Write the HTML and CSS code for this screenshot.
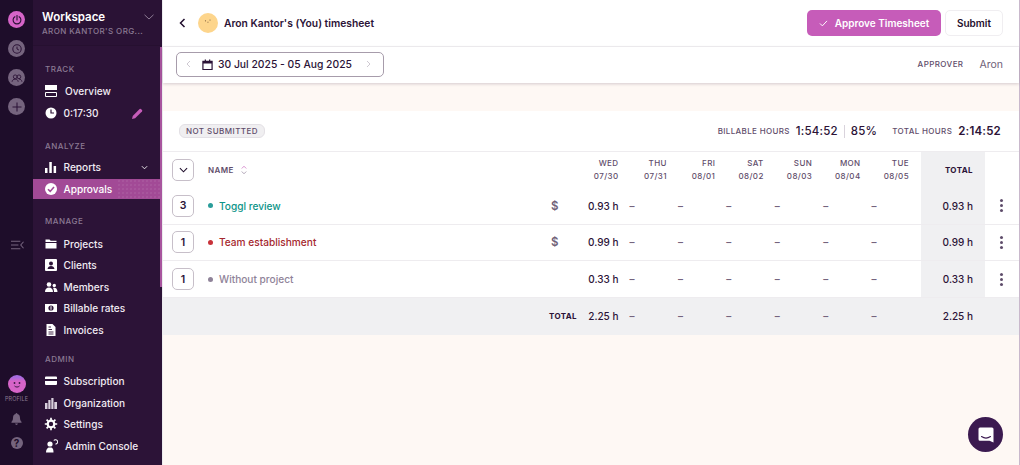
FILE: index.html
```html
<!DOCTYPE html>
<html lang="en">
<head>
<meta charset="utf-8">
<title>Timesheet</title>
<link rel="stylesheet" href="styles.css">
</head>
<body>
<div class="app">
  <nav class="rail">
    <div class="rail-btn pink"><svg viewBox="0 0 16 16" class="i12"><path d="M5.2 3.6a5.2 5.2 0 1 0 5.6 0" fill="none" stroke="#2c1337" stroke-width="1.5" stroke-linecap="round"/><path d="M8 2v6" stroke="#2c1337" stroke-width="1.5" stroke-linecap="round"/></svg></div>
    <div class="rail-btn"><svg viewBox="0 0 16 16" class="i12"><circle cx="8" cy="8" r="5.6" fill="none" stroke="#2c1337" stroke-width="1.4"/><path d="M8 4.8V8l2.6 1.4" fill="none" stroke="#2c1337" stroke-width="1.3"/></svg></div>
    <div class="rail-btn"><svg viewBox="0 0 16 16" class="i12"><circle cx="5.6" cy="6.4" r="2.5" fill="none" stroke="#2c1337" stroke-width="1.2"/><circle cx="10.6" cy="6.4" r="2.5" fill="none" stroke="#2c1337" stroke-width="1.2"/><path d="M1.4 13c.3-2.4 2-3.4 4.2-3.4s3.7 1 4 3.4M10.8 9.6c2 0 3.5 1 3.8 3.4" fill="none" stroke="#2c1337" stroke-width="1.2"/></svg></div>
    <div class="rail-btn"><svg viewBox="0 0 16 16" class="i12"><path d="M8 2v12M2 8h12" stroke="#2c1337" stroke-width="1.4"/></svg></div>
    <svg viewBox="0 0 14 10" class="collapse"><path d="M0 1h10M0 5h8M0 9h10" stroke="#75647e" stroke-width="1.1" fill="none"/><path d="M13.5 1.5 10.5 5l3 3.5" stroke="#75647e" stroke-width="1.1" fill="none"/></svg>
    <div class="avatar"><svg viewBox="0 0 18 18" class="i18"><circle cx="6.5" cy="8" r=".9" fill="#3a1a45"/><circle cx="11.5" cy="8" r=".9" fill="#3a1a45"/><path d="M6.5 11c1.5 1.4 3.5 1.4 5 0" stroke="#3a1a45" fill="none"/></svg></div>
    <span class="profile">PROFILE</span>
    <svg viewBox="0 0 12 13" class="bell"><path d="M6 0c.6 0 1 .4 1 1 2 .5 2.8 2 2.8 4 0 2.500.8 3.500 1.700 4.500v1H.5v-1C1.400 8.500 2.200 7.500 2.200 5c0-2 .8-3.500 2.800-4 0-.6.4-1 1-1zM4.500 11.500h3C7.400 12.500 6.800 13 6 13s-1.400-.5-1.500-1.500z" fill="#75647e"/></svg>
    <div class="help">?</div>
  </nav>

  <aside class="side">
    <header class="ws">
      <div class="ws-text">
        <div class="ws-name">Workspace</div>
        <div class="ws-org">ARON KANTOR'S ORG...</div>
      </div>
      <svg viewBox="0 0 10 6" class="ws-chev"><path d="M.5.8 5 5 9.500.8" fill="none" stroke="#8b7a93" stroke-width="1"/></svg>
    </header>
    <div class="group track">
      <div class="label">TRACK</div>
      <a class="item wide"><svg viewBox="0 0 14 14" class="ic"><path d="M1 1h12v5H1z" fill="#fff"/><path d="M1.500 8.500h11v4h-11z" fill="none" stroke="#fff"/></svg>Overview</a>
      <a class="item"><svg viewBox="0 0 14 14" class="ic"><circle cx="7" cy="7" r="5.500" fill="#fff"/><path d="M7 3.500V7h3" fill="none" stroke="#2c1337" stroke-width="1.200"/></svg>0:17:30<svg viewBox="0 0 12 12" class="pencil"><path d="M0 12l.8-3.400L8.300 1.100a1 1 0 0 1 1.400 0l1.200 1.200a1 1 0 0 1 0 1.400L3.400 11.200z" fill="#c65cb9"/></svg></a>
    </div>
    <div class="group analyze">
      <div class="label">ANALYZE</div>
      <a class="item"><svg viewBox="0 0 14 14" class="ic"><path d="M1 8h2.500v5H1zM5.300 2h2.500v11H5.300zM9.600 6h2.500v7H9.600z" fill="#fff"/></svg>Reports<svg viewBox="0 0 8 5" class="rep-chev"><path d="M1 1l3 3 3-3" fill="none" stroke="#fff" stroke-width="1"/></svg></a>
      <a class="item active"><svg viewBox="0 0 14 14" class="ic"><circle cx="7" cy="7" r="6" fill="#fff"/><path d="M4 7.200l2.200 2.200L10 5" fill="none" stroke="#a24a96" stroke-width="1.600"/></svg>Approvals</a>
    </div>
    <div class="group manage">
      <div class="label">MANAGE</div>
      <a class="item"><svg viewBox="0 0 14 14" class="ic"><path d="M1.500 2.500h4l1.200 1.300h5.800v1.200h-11zM1.500 6h11v5.500h-11z" fill="#fff"/></svg>Projects</a>
      <a class="item"><svg viewBox="0 0 14 14" class="ic"><path d="M2 1h10a1 1 0 0 1 1 1v10a1 1 0 0 1-1 1H2a1 1 0 0 1-1-1V2a1 1 0 0 1 1-1z" fill="#fff"/><circle cx="7" cy="5.500" r="2" fill="#2c1337"/><path d="M3.500 11c.3-2 1.800-3 3.500-3s3.200 1 3.500 3z" fill="#2c1337"/></svg>Clients</a>
      <a class="item"><svg viewBox="0 0 14 14" class="ic"><circle cx="5" cy="4.500" r="2.300" fill="#fff"/><circle cx="10.300" cy="5.500" r="1.700" fill="#fff"/><path d="M1 12c0-3 1.700-4.500 4-4.500S9 9 9 12zM10 12c0-1.500-.3-3-1-4 2.500-.7 4.500.8 4.500 4z" fill="#fff"/></svg>Members</a>
      <a class="item"><svg viewBox="0 0 14 14" class="ic"><path d="M1 3h12v8H1z" fill="#fff"/><circle cx="7" cy="7" r="2.600" fill="#2c1337"/><path d="M7 5.200v3.600" stroke="#fff"/></svg>Billable rates</a>
      <a class="item"><svg viewBox="0 0 14 14" class="ic"><path d="M2.500 1h6l3 3v9h-9z" fill="#fff"/><path d="M4.500 4h2.500M4.500 6.500h3.500M4.500 9h5M4.500 11h5" stroke="#2c1337" stroke-width=".9"/></svg>Invoices</a>
    </div>
    <div class="group admin">
      <div class="label">ADMIN</div>
      <a class="item"><svg viewBox="0 0 14 14" class="ic"><path d="M2 2.500h10a1 1 0 0 1 1 1V5H1V3.500a1 1 0 0 1 1-1zM1 7h12v3a1 1 0 0 1-1 1H2a1 1 0 0 1-1-1z" fill="#fff"/></svg>Subscription</a>
      <a class="item"><svg viewBox="0 0 14 14" class="ic"><path d="M1 7h2.500v6H1zM4.300 4h2.200v9H4.300zM7.300 2h2.200v11H7.300zM10.300 6H13v7h-2.700z" fill="#d8cfdc"/></svg>Organization</a>
      <a class="item"><svg viewBox="0 0 14 14" class="ic"><circle cx="7" cy="7" r="3.300" fill="none" stroke="#fff" stroke-width="2.200"/><path d="M7 .8v2.400M7 10.800v2.400M.8 7h2.400M10.800 7h2.400M2.600 2.600l1.700 1.700M9.700 9.700l1.700 1.700M2.600 11.400l1.700-1.700M9.700 4.300l1.700-1.700" stroke="#fff" stroke-width="1.700"/></svg>Settings</a>
      <a class="item wide"><svg viewBox="0 0 14 14" class="ic"><circle cx="6" cy="5" r="2.600" fill="#fff"/><path d="M2 13.500c0-2 .6-4 2.500-5h3c1.500.6 2 2.500 2 5z" fill="#fff"/><path d="M9.800 1.500a2.200 2.200 0 1 1 1.700 3.600" fill="none" stroke="#fff" stroke-width="1.100"/></svg>Admin Console</a>
    </div>
  </aside>
  <div class="thumb"></div>

  <main class="main">
    <header class="top">
      <svg viewBox="0 0 7 10" class="back"><path d="M5.500 1 1.500 5l4 4" fill="none" stroke="#1f0d2c" stroke-width="1.500"/></svg>
      <div class="face"><svg viewBox="0 0 20 20" class="i20"><circle cx="7.500" cy="7.800" r=".6" fill="#7a5a3a"/><circle cx="12" cy="7" r=".6" fill="#7a5a3a"/><path d="M9 9c.6.500 1.200.500 1.800.1" stroke="#7a5a3a" stroke-width=".5" fill="none"/></svg></div>
      <h1 class="title">Aron Kantor's (You) timesheet</h1>
      <button class="btn approve"><svg viewBox="0 0 10 8" class="check"><path d="M1 4l2.700 2.700L9 1" fill="none" stroke="#fff" stroke-width="1.100"/></svg>Approve Timesheet</button>
      <button class="btn submit">Submit</button>
    </header>
    <section class="datebar">
      <div class="range">
        <svg viewBox="0 0 5 8" class="arrow"><path d="M4 1 1 4l3 3" fill="none" stroke="#cfc9d2" stroke-width="1"/></svg>
        <svg viewBox="0 0 12 12" class="cal"><path d="M1 2.500h10v9H1z" fill="none" stroke="#2c1337" stroke-width="1.300"/><path d="M1 2.500h10V5H1zM3 .5h1.300v2H3zM7.700.5H9v2H7.700z" fill="#2c1337"/></svg>
        <span class="range-text">30 Jul 2025 - 05 Aug 2025</span>
        <svg viewBox="0 0 5 8" class="arrow"><path d="M1 1l3 3-3 3" fill="none" stroke="#cfc9d2" stroke-width="1"/></svg>
      </div>
      <span class="approver">APPROVER</span>
      <span class="aron">Aron</span>
    </section>
    <div class="band"></div>
    <section class="sheet">
      <div class="status">
        <span class="pill">NOT SUBMITTED</span>
        <span class="stat-label">BILLABLE HOURS</span>
        <span class="stat-val">1:54:52</span>
        <span class="stat-sep"></span>
        <span class="stat-val">85%</span>
        <span class="stat-label gap">TOTAL HOURS</span>
        <span class="stat-val strong">2:14:52</span>
      </div>
      <div class="row head">
        <div class="c-count"><span class="box"><svg viewBox="0 0 10 6" class="box-chev"><path d="M1 1l4 4 4-4" fill="none" stroke="#1f0d2c" stroke-width="1.200"/></svg></span></div>
        <div class="c-name name-head">NAME<svg viewBox="0 0 8 12" class="sort"><path d="M1 4l3-3 3 3" fill="none" stroke="#c65cb9" stroke-width=".9"/><path d="M1 8l3 3 3-3" fill="none" stroke="#8b7a93" stroke-width=".9"/></svg></div>
        <div class="c-bill"></div>
        <div class="day"><b>WED</b><i>07/30</i></div>
        <div class="day"><b>THU</b><i>07/31</i></div>
        <div class="day"><b>FRI</b><i>08/01</i></div>
        <div class="day"><b>SAT</b><i>08/02</i></div>
        <div class="day"><b>SUN</b><i>08/03</i></div>
        <div class="day"><b>MON</b><i>08/04</i></div>
        <div class="day"><b>TUE</b><i>08/05</i></div>
        <div class="c-total head-total">TOTAL</div>
        <div class="c-menu"></div>
      </div>
      <div class="row line">
        <div class="c-count"><span class="box">3</span></div>
        <div class="c-name teal"><span class="dot"></span>Toggl review</div>
        <div class="c-bill">$</div>
        <div class="val">0.93 h</div><div class="dash">–</div><div class="dash">–</div><div class="dash">–</div><div class="dash">–</div><div class="dash">–</div><div class="dash">–</div>
        <div class="c-total">0.93 h</div>
        <div class="c-menu"><span class="kebab"></span></div>
      </div>
      <div class="row line">
        <div class="c-count"><span class="box">1</span></div>
        <div class="c-name red"><span class="dot"></span>Team establishment</div>
        <div class="c-bill">$</div>
        <div class="val">0.99 h</div><div class="dash">–</div><div class="dash">–</div><div class="dash">–</div><div class="dash">–</div><div class="dash">–</div><div class="dash">–</div>
        <div class="c-total">0.99 h</div>
        <div class="c-menu"><span class="kebab"></span></div>
      </div>
      <div class="row line">
        <div class="c-count"><span class="box">1</span></div>
        <div class="c-name grey"><span class="dot"></span>Without project</div>
        <div class="c-bill"></div>
        <div class="val">0.33 h</div><div class="dash">–</div><div class="dash">–</div><div class="dash">–</div><div class="dash">–</div><div class="dash">–</div><div class="dash">–</div>
        <div class="c-total">0.33 h</div>
        <div class="c-menu"><span class="kebab"></span></div>
      </div>
      <div class="row foot">
        <div class="foot-label">TOTAL</div>
        <div class="val">2.25 h</div><div class="dash">–</div><div class="dash">–</div><div class="dash">–</div><div class="dash">–</div><div class="dash">–</div><div class="dash">–</div>
        <div class="c-total">2.25 h</div>
        <div class="c-menu"></div>
      </div>
    </section>
  </main>
  <button class="chat"><svg viewBox="0 0 18 18" class="i18"><path d="M3 1.500h12a1.500 1.500 0 0 1 1.500 1.500v13.500l-4-1.700H3A1.500 1.500 0 0 1 1.500 13.300V3A1.500 1.500 0 0 1 3 1.500z" fill="#fff"/><path d="M4.500 10.500c2.800 2 6.200 2 9 0" fill="none" stroke="#3b1a50" stroke-width="1.100" stroke-linecap="round"/></svg></button>
</div>
</body>
</html>
```
FILE: styles.css
```css
* { box-sizing: border-box; }
html, body { margin: 0; height: 100%; overflow: hidden; }
body { font-family: Inter, "Liberation Sans", sans-serif; color: #2c1337; background: #fff; }
svg { display: block; flex: none; }
.app { position: relative; display: flex; width: 1020px; height: 465px; overflow: hidden; }

/* rail */
.rail { width: 33px; flex: none; background: #1e0d2a; display: flex; flex-direction: column; align-items: center; padding-top: 11px; }
.rail-btn { width: 17px; height: 17px; border-radius: 50%; background: #75647e; display: flex; align-items: center; justify-content: center; margin-bottom: 12px; }
.rail-btn.pink { background: #d664c8; }
.i12 { width: 12px; height: 12px; }
.i18 { width: 18px; height: 18px; }
.i20 { width: 20px; height: 20px; }
.collapse { width: 13px; height: 10px; margin-top: 113px; margin-left: 1px; }
.avatar { width: 18px; height: 18px; border-radius: 50%; background: linear-gradient(#a56be0 0 12%, #d664c8 35%); margin-top: 125px; }
.profile { font-size: 5.500px; letter-spacing: .1px; color: #8b7a93; margin-top: 2px; line-height: 8px; }
.bell { width: 11px; height: 12px; margin-top: 10px; }
.help { width: 12px; height: 12px; border-radius: 50%; background: #75647e; color: #1e0d2a; font-size: 10px; font-weight: 700; line-height: 12px; text-align: center; margin-top: 12px; }

/* sidebar */
.side { width: 129px; flex: none; background: #2c1337; color: #f1ebf3; display: flex; flex-direction: column; }
.ws { height: 46px; flex: none; display: flex; justify-content: space-between; padding: 10px 4px 0 9px; background: #2a1235; border-bottom: 1px solid #261030; }
.ws-text { width: 100px; flex: none; }
.ws-name { font-size: 11.500px; font-weight: 600; color: #fff; line-height: 14px; }
.ws-org { font-size: 8px; font-weight: 500; letter-spacing: .4px; color: #8b7a93; line-height: 10px; margin-top: 2px; white-space: nowrap; }
.ws-chev { width: 10px; height: 6px; margin: 4px 4px 0 0; }
.label { font-size: 8px; font-weight: 500; letter-spacing: .5px; color: #8b7a93; line-height: 12px; padding-left: 12px; margin-bottom: 5px; }
.track { margin-top: 17px; }
.analyze { margin-top: 15.500px; }
.manage { margin-top: 15px; }
.manage .label { margin-bottom: 6px; }
.admin { margin-top: 12px; }
.admin .label { margin-bottom: 6px; }
.track .item { height: 22px; }
.item { display: flex; align-items: center; height: 21.500px; padding: 0 14px 0 11px; font-size: 10.100px; font-weight: 500; color: #f1ebf3; }
.item.wide .ic { margin-right: 7px; }
.ic { width: 14px; height: 14px; margin-right: 5.500px; }
.item.active { position: relative; height: 20px; background: #a24a96; color: #fff; margin: 1px 0; }
.item.active::after { content: ""; position: absolute; right: 0; top: 0; bottom: 0; width: 45px; background: radial-gradient(rgba(255,255,255,.14) .6px, transparent .8px) 0 0 / 4px 4px; }
.pencil { width: 11px; height: 11px; margin: 0 5px 0 auto; }
.rep-chev { width: 7px; height: 5px; margin-left: auto; }
.thumb { position: absolute; left: 160px; top: 47px; width: 2px; height: 240px; background: #a8559e; }

/* main */
.main { flex: 1; min-width: 0; background: #fef8f4; border-right: 1px solid #c9b8cc; border-left: 1px solid #ececee; display: flex; flex-direction: column; }
.top { height: 47px; flex: none; background: #fff; display: flex; align-items: center; padding: 0 16px; border-bottom: 1px solid #f2f1f3; }
.back { width: 7px; height: 10px; }
.face { width: 20px; height: 20px; border-radius: 50%; background: #fdd58c; margin-left: 12px; }
.title { font-size: 10.300px; font-weight: 600; color: #2c1337; margin: 0 auto 0 6px; }
.btn { font-family: inherit; font-size: 10px; font-weight: 600; height: 26px; border-radius: 5px; display: flex; align-items: center; justify-content: center; padding: 0; }
.approve { width: 134px; background: #c65cb9; color: #fff; border: 0; }
.check { width: 9px; height: 7px; margin-right: 7px; }
.submit { width: 58px; background: #fff; color: #1f0d2c; border: 1px solid #f0eef1; margin-left: 4px; }
.datebar { height: 36px; flex: none; background: #fff; display: flex; align-items: center; padding: 0 16px 2px 13px; box-shadow: 0 1px 3px rgba(44,19,55,.2); position: relative; }
.range { width: 208px; height: 25px; border: 1px solid #a79cab; border-radius: 5px; display: flex; align-items: center; padding: 0 12px 0 9px; margin-right: auto; }
.arrow { width: 5px; height: 8px; }
.cal { width: 11px; height: 11px; margin: 0 5px 0 11px; }
.range-text { font-size: 10.350px; font-weight: 500; margin-right: auto; white-space: pre; }
.approver { font-size: 8px; font-weight: 500; letter-spacing: .4px; color: #5f4d6b; }
.aron { font-size: 10.500px; color: #6f6078; margin-left: 16px; }
.band { height: 28px; flex: none; }

.sheet { background: #fff; flex: none; }
.status { height: 40px; display: flex; align-items: center; padding: 0 18px 0 16px; }
.pill { font-size: 8px; font-weight: 500; letter-spacing: .45px; color: #5f4d6b; background: #f0eff1; border: 1px solid #e3e0e5; border-radius: 6px; height: 14px; line-height: 12px; padding: 0 6px; margin-right: auto; }
.stat-label { font-size: 8px; font-weight: 500; letter-spacing: .35px; color: #5f4d6b; }
.stat-label.gap { margin-left: 15px; }
.stat-val { font-size: 11.500px; font-weight: 500; letter-spacing: .2px; color: #2c1337; margin-left: 6px; }
.stat-val.strong { font-weight: 600; }
.stat-sep { width: 1px; height: 13px; background: #d9d3dc; margin-left: 6px; }

.row { display: grid; grid-template-columns: 45px 1fr 23px repeat(7, 48.430px) 12px 64px 34px; align-items: center; font-size: 10px; font-weight: 500; }
.row > .c-total { grid-column: 12; align-self: stretch; background: #f0f0f2; display: flex; align-items: center; justify-content: flex-end; padding-right: 12px; }
.row > .c-menu { grid-column: 13; display: flex; justify-content: center; padding-right: 1px; }
.head { height: 37px; border-top: 1px solid #eeecef; }
.line { height: 36.670px; border-bottom: 1px solid #eeecef; }
.foot { height: 37px; background: #f0f0f2; }
.c-count { padding-left: 9px; }
.box { width: 22px; height: 22px; border: 1px solid #c7bfc9; border-radius: 5px; display: flex; align-items: center; justify-content: center; font-size: 10.500px; font-weight: 600; color: #2c1337; }
.box-chev { width: 9px; height: 6px; }
.c-name { display: flex; align-items: center; font-size: 10.150px; font-weight: 500; min-width: 0; }
.name-head { font-size: 8px; letter-spacing: .4px; color: #5f4d6b; font-weight: 600; }
.sort { width: 6px; height: 10px; margin-left: 7px; }
.dot { width: 5px; height: 5px; border-radius: 50%; margin-right: 6px; background: currentColor; }
.teal { color: #0d9488; }
.teal .dot { background: #2a9d9a; }
.red { color: #a5282e; }
.red .dot { background: #c8323a; }
.grey { color: #8f8399; }
.c-bill { font-size: 11.500px; font-weight: 600; color: #6f6278; padding-left: 4px; }
.day { text-align: right; display: flex; flex-direction: column; font-size: 8px; letter-spacing: .4px; line-height: 13px; color: #5f4d6b; }
.day b { font-weight: 500; }
.day i { font-style: normal; }
.head-total { font-size: 8px; font-weight: 700; letter-spacing: .4px; color: #2c1337; }
.val { text-align: right; color: #2c1337; }
.dash { color: #75647e; padding-left: 11px; font-weight: 600; }
.foot-label { grid-column: 3; justify-self: end; margin-right: -7px; font-size: 8px; font-weight: 700; letter-spacing: .4px; }
.foot .val { grid-column: 4; }
.kebab { width: 3px; height: 3px; border-radius: 50%; background: #5f4d6b; box-shadow: 0 -5px 0 #5f4d6b, 0 5px 0 #5f4d6b; }
.chat { position: absolute; left: 968px; top: 417px; width: 35px; height: 35px; border-radius: 50%; background: #3b1a50; border: 0; padding: 0; display: flex; align-items: center; justify-content: center; }
```
